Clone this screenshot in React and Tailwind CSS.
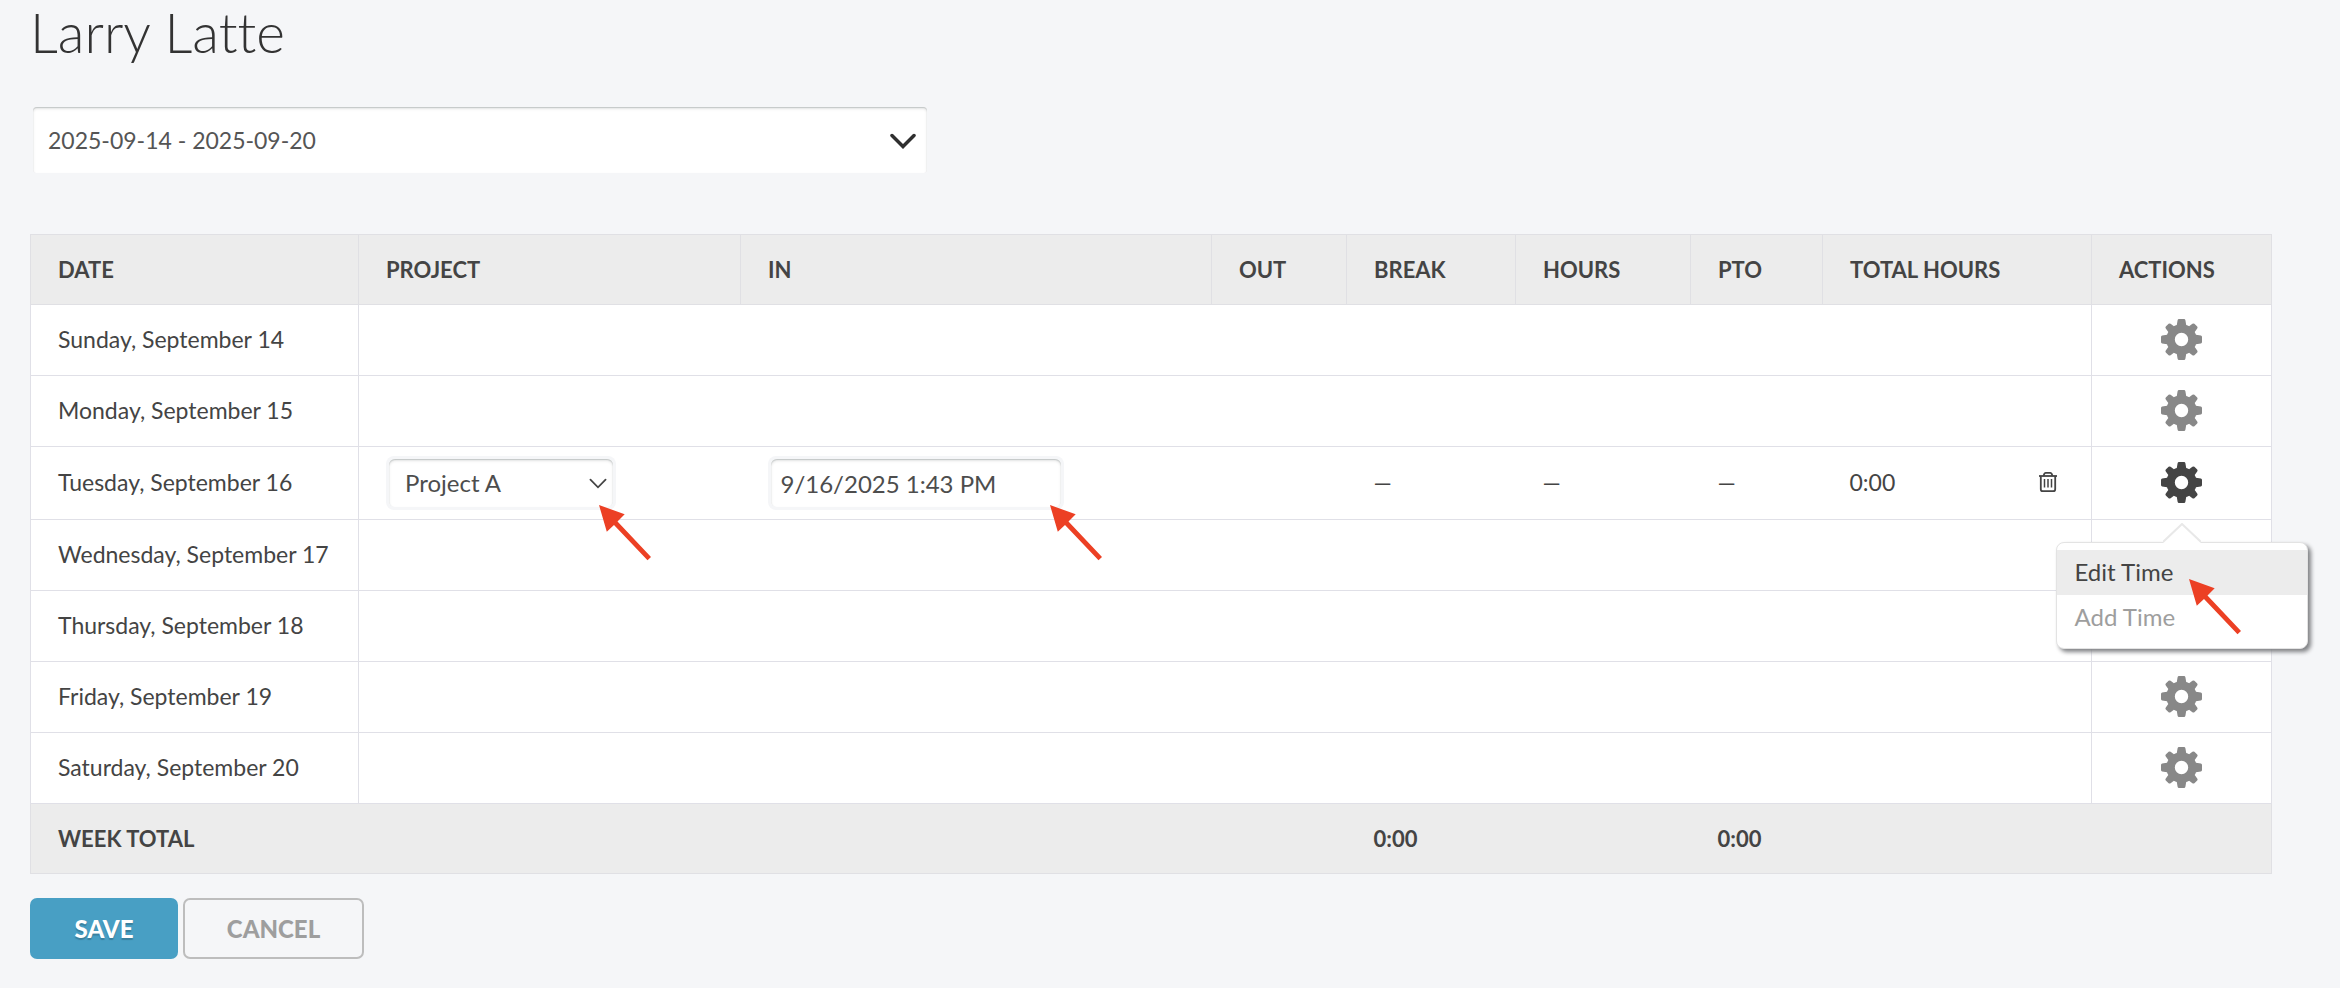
const gearPath =
  'M16.6 1.2 Q16.8 0 18 0 H23 Q24.2 0 24.4 1.2 L25.2 6 Q26.8 6.5 28.1 7.3 L31.4 4.8 Q32.5 4 33.4 4.8 L36.2 7.6 Q37 8.5 36.2 9.6 L33.7 12.9 Q34.5 14.2 35 15.8 L39.8 16.6 Q41 16.8 41 18 V23 Q41 24.2 39.8 24.4 L35 25.2 Q34.5 26.8 33.7 28.1 L36.2 31.4 Q37 32.5 36.2 33.4 L33.4 36.2 Q32.5 37 31.4 36.2 L28.1 33.7 Q26.8 34.5 25.2 35 L24.4 39.8 Q24.2 41 23 41 H18 Q16.8 41 16.6 39.8 L15.8 35 Q14.2 34.5 12.9 33.7 L9.6 36.2 Q8.5 37 7.6 36.2 L4.8 33.4 Q4 32.5 4.8 31.4 L7.3 28.1 Q6.5 26.8 6 25.2 L1.2 24.4 Q0 24.2 0 23 V18 Q0 16.8 1.2 16.6 L6 15.8 Q6.5 14.2 7.3 12.9 L4.8 9.6 Q4 8.5 4.8 7.6 L7.6 4.8 Q8.5 4 9.6 4.8 L12.9 7.3 Q14.2 6.5 15.8 6 Z M20.5 13.8 A6.7 6.7 0 1 0 20.5 27.2 A6.7 6.7 0 1 0 20.5 13.8 Z';

const GearIcon = () => (
  <svg viewBox="0 0 41 41" className="h-[41px] w-[41px]" fill="currentColor" fillRule="evenodd" aria-hidden="true">
    <path d={gearPath} />
  </svg>
);

const TrashIcon = () => (
  <svg viewBox="0 0 20 22" className="h-[22px] w-[20px]" fill="none" stroke="currentColor" strokeWidth="1.8" aria-hidden="true">
    <path d="M1 5 H19" />
    <path d="M5.5 5 L6.3 2.8 Q6.7 1.8 7.6 1.8 H12.4 Q13.3 1.8 13.7 2.8 L14.5 5" />
    <path d="M2.8 5 V18.2 Q2.8 20.2 4.8 20.2 H15.2 Q17.2 20.2 17.2 18.2 V5" />
    <path d="M6.5 8 V16.5 M10 8 V16.5 M13.5 8 V16.5" strokeWidth="1.5" />
  </svg>
);

const Chevron = ({ className, strokeWidth }) => (
  <svg viewBox="0 0 26 16" className={className} fill="none" stroke="currentColor" strokeWidth={strokeWidth} strokeLinecap="round" aria-hidden="true">
    <path d="M2 2.5 L13 13.5 L24 2.5" />
  </svg>
);

const RedArrow = ({ className }) => (
  <svg viewBox="0 0 54 56" className={`pointer-events-none absolute z-20 h-[56px] w-[54px] ${className}`} aria-hidden="true">
    <path d="M0 0 L25.7 9.3 L18.5 16.5 L52 52 L48.5 55.3 L15 20 L7.8 26.7 Z" fill="#ec4024" />
  </svg>
);

const columns = [
  { label: 'Date', width: 328 },
  { label: 'Project', width: 382 },
  { label: 'In', width: 471 },
  { label: 'Out', width: 135 },
  { label: 'Break', width: 169 },
  { label: 'Hours', width: 175 },
  { label: 'PTO', width: 132 },
  { label: 'Total Hours', width: 269 },
  { label: 'Actions', width: 180 },
];

const days = [
  { date: 'Sunday, September 14' },
  { date: 'Monday, September 15' },
  {
    date: 'Tuesday, September 16',
    entry: { project: 'Project A', in: '9/16/2025 1:43 PM', total: '0:00' },
  },
  { date: 'Wednesday, September 17' },
  { date: 'Thursday, September 18' },
  { date: 'Friday, September 19' },
  { date: 'Saturday, September 20' },
];

const fieldClass =
  'h-12 w-full appearance-none rounded-md bg-white text-[24px] text-[#4d4d4d] outline-none shadow-[inset_0_1px_1px_#c4c8c8,inset_0_2px_3px_#e6e6e6]';

const ActionsMenu = () => (
  <div className="absolute top-[80px] left-1/2 z-10 w-[252px] -translate-x-1/2 rounded-lg border border-[#e3e3e3] bg-white pt-[7px] pb-2 text-left shadow-[3px_3px_4px_#808285]">
    <svg viewBox="0 0 38 20" className="absolute -top-[20px] left-1/2 h-[20px] w-[38px] -translate-x-1/2" aria-hidden="true">
      <path d="M0 20 L19 1 L38 20 Z" fill="#fff" />
      <path d="M0 19 L19 1 L38 19" fill="none" stroke="#e8e8e8" strokeWidth="2" />
    </svg>
    <button type="button" className="block h-[45px] w-full bg-[#ececec] pl-[18px] text-left text-[24px] text-[#444]">
      Edit Time
    </button>
    <button type="button" className="block h-[45px] w-full pl-[18px] text-left text-[24px] text-[#9e9e9e]">
      Add Time
    </button>
    <RedArrow className="top-[36px] right-[64px]" />
  </div>
);

const EntryCells = ({ entry }) => (
  <>
    <td className="pl-[27px]">
      <div className="relative w-[230px] rounded-lg bg-[#f5f6f8] p-[3px]">
        <select aria-label="Project" className={`${fieldClass} px-[16px]`}>
          <option>{entry.project}</option>
        </select>
        <Chevron className="pointer-events-none absolute top-[22px] right-[9px] h-[11px] w-[18px] text-[#444]" strokeWidth="2.6" />
        <RedArrow className="top-[49px] left-[213px]" />
      </div>
    </td>
    <td className="pl-[27px]">
      <div className="relative w-[296px] rounded-lg bg-[#f5f6f8] p-[3px]">
        <input type="text" aria-label="In" defaultValue={entry.in} className={`${fieldClass} px-[10px]`} />
        <RedArrow className="top-[49px] left-[282px]" />
      </div>
    </td>
    <td />
    <td className="pb-0.5 pl-[27px]">—</td>
    <td className="pb-0.5 pl-[27px]">—</td>
    <td className="pb-0.5 pl-[27px]">—</td>
    <td className="pb-0.5 pl-[27px]">
      <div className="flex items-center justify-between pr-[33px]">
        {entry.total}
        <button type="button" aria-label="Delete entry">
          <TrashIcon />
        </button>
      </div>
    </td>
  </>
);

const DayRow = ({ day }) => (
  <tr className={`border border-[#e0e0e7] bg-white ${day.entry ? 'h-[73px]' : 'h-[71px]'}`}>
    <td className="border-r border-[#e0e0e7] pb-0.5 pl-[27px]">{day.date}</td>
    {day.entry ? <EntryCells entry={day.entry} /> : <td colSpan={7} />}
    <td className="border-l border-[#e0e0e7] pb-0.5 text-center">
      <div className="relative flex justify-center">
        <button type="button" aria-label={`Actions for ${day.date}`} className={day.entry ? 'text-[#444]' : 'text-[#888]'}>
          <GearIcon />
        </button>
        {day.entry && <ActionsMenu />}
      </div>
    </td>
  </tr>
);

const App = () => {
  return (
    <main className="min-h-screen bg-[#f5f6f8] pr-[69px] pl-[30px] font-['Lato',sans-serif] text-[23px] text-[#444] [font-variant-ligatures:none]">
      <h1 className="text-[55px] leading-[64px] font-light text-[#333]">Larry Latte</h1>

      <div className="relative mt-10 w-[900px] max-w-full p-[3px]">
        <select
          aria-label="Pay period"
          className="h-[66px] w-full appearance-none rounded bg-white px-[15px] text-[23px] text-[#555] outline-none shadow-[inset_0_1px_1px_#c4c8c8,inset_0_2px_3px_#e6e6e6]"
        >
          <option>2025-09-14 - 2025-09-20</option>
        </select>
        <Chevron className="pointer-events-none absolute top-[29px] right-[14px] h-4 w-[26px] text-[#2f2f2f]" strokeWidth="3.5" />
      </div>

      <table className="mt-[58px] w-full table-fixed border-collapse">
        <colgroup>
          {columns.map((c) => (
            <col key={c.label} style={{ width: c.width }} />
          ))}
        </colgroup>
        <thead>
          <tr className="h-[70px] bg-[#ececec]">
            {columns.map((c) => (
              <th key={c.label} className="border border-[#e0e0e4] pl-[27px] text-left text-[22px] font-bold uppercase">
                {c.label}
              </th>
            ))}
          </tr>
        </thead>
        <tbody>
          {days.map((day) => (
            <DayRow key={day.date} day={day} />
          ))}
        </tbody>
        <tfoot>
          <tr className="h-[70px] border border-[#e0e0e4] bg-[#ececec] text-left text-[22px] font-bold">
            <th scope="row" colSpan={4} className="pl-[27px]">WEEK TOTAL</th>
            <td colSpan={2} className="pl-[27px]">0:00</td>
            <td colSpan={3} className="pl-[27px]">0:00</td>
          </tr>
        </tfoot>
      </table>

      <div className="mt-6 flex gap-[5px]">
        <button type="button" className="h-[61px] w-[148px] rounded-[7px] bg-[#489fc4] text-[24px] font-black text-white text-shadow-[0_2px_1px_#3a7f9d]">
          SAVE
        </button>
        <button type="button" className="h-[61px] w-[181px] rounded-[7px] border-2 border-[#bdbdbd] text-[24px] font-black text-[#9e9e9e]">
          CANCEL
        </button>
      </div>
    </main>
  );
};

export default App;
